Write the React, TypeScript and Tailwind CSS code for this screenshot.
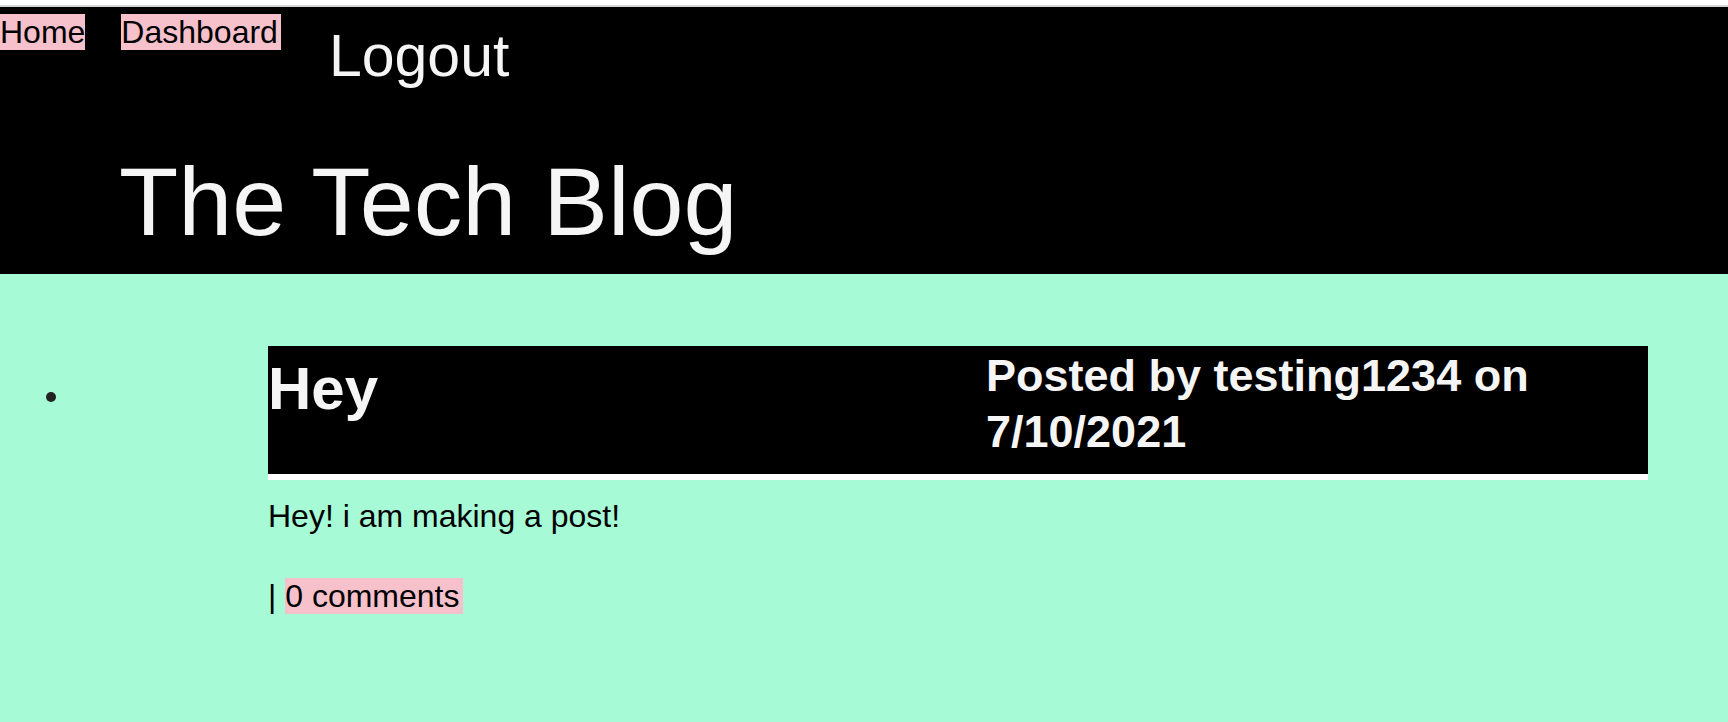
export default function App() {
  return (
    <div className="min-h-screen bg-[#a6fad6] font-['Liberation_Sans',Arial,sans-serif] text-black">
      {/* top edge */}
      <div className="h-[5px] bg-white" />
      <div className="h-[2px] bg-[#d6d6d6]" />

      <header className="h-[267px] bg-black text-[#f5f5f5]">
        <nav className="flex items-start">
          <a href="#" className="mt-[7px] inline-block bg-[#f7c1cc] text-[32px] leading-[36px] text-black">
            Home
          </a>
          <a href="#" className="ml-[36px] mt-[7px] inline-block bg-[#f7c1cc] pr-[3px] text-[32px] leading-[36px] text-black">
            Dashboard
          </a>
          <button className="ml-[48px] mt-[16px] text-[59px] leading-[67px] text-[#f5f5f5]">Logout</button>
        </nav>
        <h1 className="mt-[56px] pl-[119px] text-[97px] leading-[111px]">The Tech Blog</h1>
      </header>

      <main className="pt-[72px]">
        <ul className="flex">
          <li className="flex">
            <div className="w-[268px] pl-[46px] pt-[46px]">
              <div className="h-[10px] w-[10px] rounded-full bg-[#222]" />
            </div>
            <div className="w-[1380px]">
              <div className="flex h-[128px] bg-black text-[#f5f5f5]">
                <h2 className="mt-[8px] w-[718px] text-[60px] font-bold leading-[69px]">Hey</h2>
                <p className="mt-[2px] flex-1 text-[45px] font-bold leading-[56px]">
                  Posted by testing1234 on 7/10/2021
                </p>
              </div>
              <div className="h-[6px] bg-white" />
              <p className="mt-[18px] text-[32px] leading-[37px]">Hey! i am making a post!</p>
              <p className="mt-[43px] text-[32px] leading-[36px]">
                |{" "}
                <a href="#" className="inline-block bg-[#f7c1cc] pr-[4px]">
                  0 comments
                </a>
              </p>
            </div>
          </li>
        </ul>
      </main>
    </div>
  );
}
